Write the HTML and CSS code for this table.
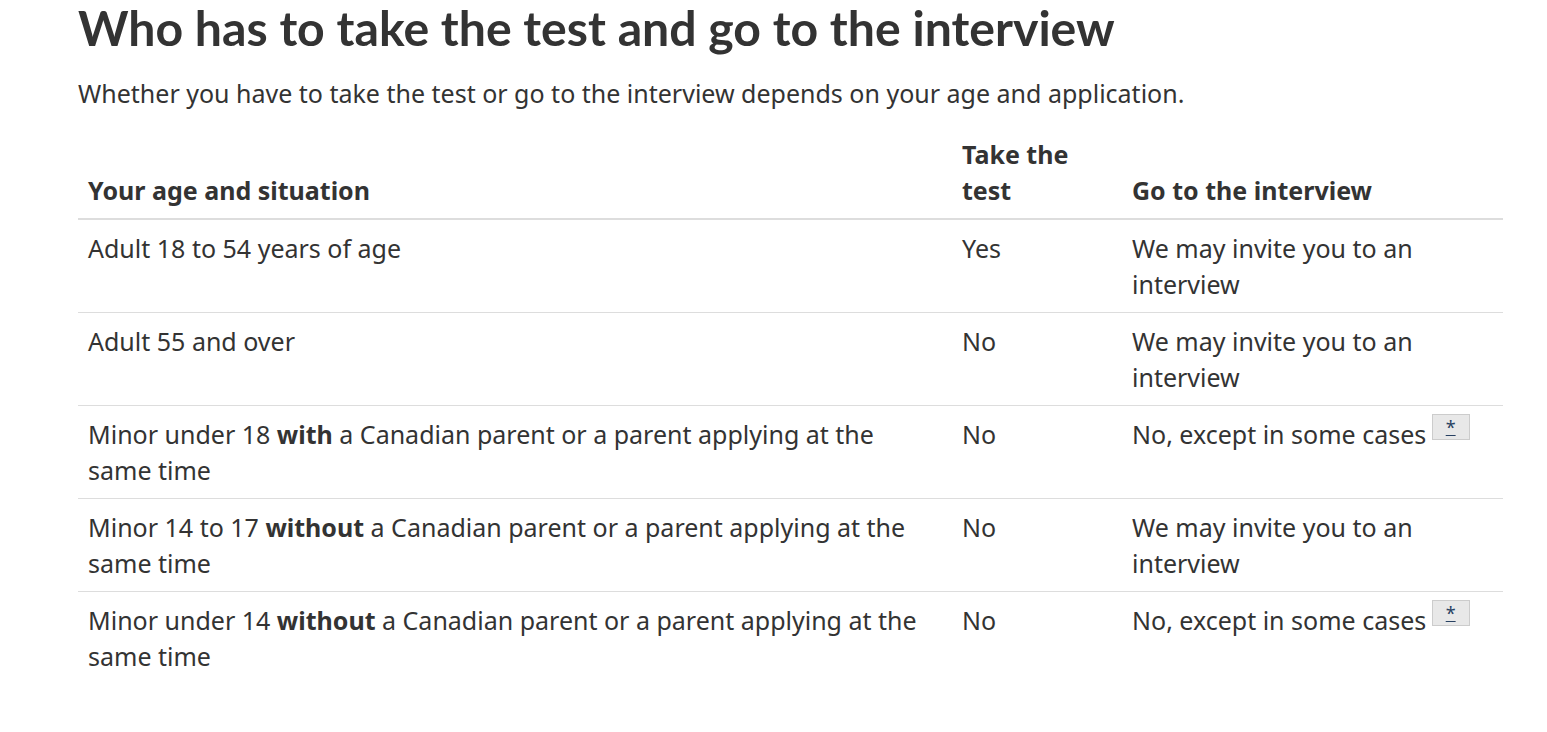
FILE: index.html
```html
<!DOCTYPE html>
<html lang="en">
<head>
<meta charset="utf-8">
<title>Who has to take the test and go to the interview</title>
<link rel="stylesheet" href="styles.css">
</head>
<body>
<main class="container">
  <h1 class="title">Who has to take the test and go to the interview</h1>
  <p class="lead">Whether you have to take the test or go to the interview depends on your age and application.</p>
  <table class="grid">
    <thead>
      <tr>
        <th class="c1">Your age and situation</th>
        <th class="c2">Take the test</th>
        <th class="c3">Go to the interview</th>
      </tr>
    </thead>
    <tbody>
      <tr>
        <td>Adult 18 to 54 years of age</td>
        <td>Yes</td>
        <td>We may invite you to an interview</td>
      </tr>
      <tr>
        <td>Adult 55 and over</td>
        <td>No</td>
        <td>We may invite you to an interview</td>
      </tr>
      <tr>
        <td>Minor under 18 <strong>with</strong> a Canadian parent or a parent applying at the same time</td>
        <td>No</td>
        <td>No, except in some cases <sup class="fn"><a href="#fn">*</a></sup></td>
      </tr>
      <tr>
        <td>Minor 14 to 17 <strong>without</strong> a Canadian parent or a parent applying at the same time</td>
        <td>No</td>
        <td>We may invite you to an interview</td>
      </tr>
      <tr>
        <td>Minor under 14 <strong>without</strong> a Canadian parent or a parent applying at the same time</td>
        <td>No</td>
        <td>No, except in some cases <sup class="fn"><a href="#fn">*</a></sup></td>
      </tr>
    </tbody>
  </table>
</main>
</body>
</html>
```

FILE: styles.css
```css
html, body {
  margin: 0;
  padding: 0;
  background: #fff;
}
body {
  font-family: "Noto Sans", "DejaVu Sans", sans-serif;
  font-size: 25px;
  line-height: 36px;
  color: #333;
}
.container {
  width: 1425px;
  margin-left: 78px;
}
.title {
  font-family: Lato, "Liberation Sans", sans-serif;
  font-weight: 700;
  font-size: 48.2px;
  line-height: 54px;
  margin: 0;
  color: #333;
}
.lead {
  margin: 21px 0 15px 0;
}
.grid {
  width: 1425px;
  border-collapse: collapse;
  table-layout: fixed;
}
.grid th, .grid td {
  text-align: left;
  padding: 10px 10px;
  vertical-align: top;
}
.grid th {
  vertical-align: bottom;
  font-weight: 700;
  border-bottom: 2px solid #ddd;
}
.grid tbody td {
  border-top: 1px solid #ddd;
}
.grid tbody tr:first-child td {
  border-top: none;
}
.c1 { width: 854px; }
.c2 { width: 150px; }
.c3 { width: 361px; }
.fn {
  font-size: 18px;
  line-height: 1;
  vertical-align: top;
  margin-left: -1px;
}
.fn a {
  display: inline-block;
  vertical-align: top;
  margin-top: -2px;
  background: #e8e8e8;
  border: 1px solid #ccc;
  color: #284162;
  padding: 2px 13px 2px 13px;
  line-height: 20px;
  text-decoration: underline;
}
```
